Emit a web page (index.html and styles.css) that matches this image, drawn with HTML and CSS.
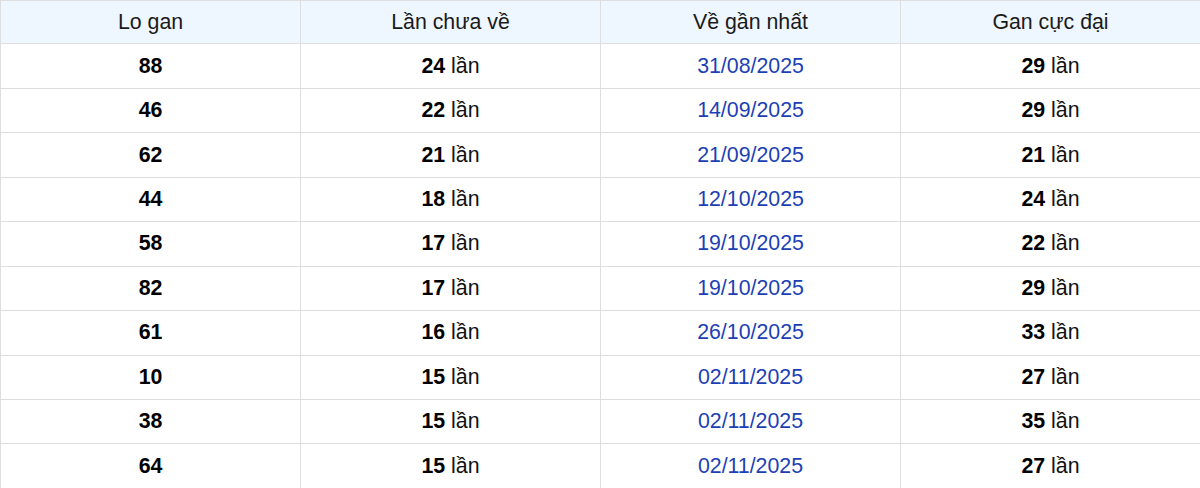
FILE: index.html
```html
<!DOCTYPE html>
<html lang="vi">
<head>
<meta charset="utf-8">
<title>Lo gan</title>
<link rel="stylesheet" href="styles.css">
</head>
<body>
<table class="gan-table">
  <colgroup><col class="c"><col class="c"><col class="c"><col class="c"></colgroup>
  <thead>
    <tr><th>Lo gan</th><th>Lần chưa về</th><th>Về gần nhất</th><th>Gan cực đại</th></tr>
  </thead>
  <tbody>
    <tr><td><b>88</b></td><td><b>24</b> lần</td><td class="date">31/08/2025</td><td><b>29</b> lần</td></tr>
    <tr><td><b>46</b></td><td><b>22</b> lần</td><td class="date">14/09/2025</td><td><b>29</b> lần</td></tr>
    <tr><td><b>62</b></td><td><b>21</b> lần</td><td class="date">21/09/2025</td><td><b>21</b> lần</td></tr>
    <tr><td><b>44</b></td><td><b>18</b> lần</td><td class="date">12/10/2025</td><td><b>24</b> lần</td></tr>
    <tr><td><b>58</b></td><td><b>17</b> lần</td><td class="date">19/10/2025</td><td><b>22</b> lần</td></tr>
    <tr><td><b>82</b></td><td><b>17</b> lần</td><td class="date">19/10/2025</td><td><b>29</b> lần</td></tr>
    <tr><td><b>61</b></td><td><b>16</b> lần</td><td class="date">26/10/2025</td><td><b>33</b> lần</td></tr>
    <tr><td><b>10</b></td><td><b>15</b> lần</td><td class="date">02/11/2025</td><td><b>27</b> lần</td></tr>
    <tr><td><b>38</b></td><td><b>15</b> lần</td><td class="date">02/11/2025</td><td><b>35</b> lần</td></tr>
    <tr><td><b>64</b></td><td><b>15</b> lần</td><td class="date">02/11/2025</td><td><b>27</b> lần</td></tr>
  </tbody>
</table>
</body>
</html>
```

FILE: styles.css
```css
html, body {
  margin: 0;
  padding: 0;
  background: #fff;
  overflow: hidden;
}
body {
  font-family: "Liberation Sans", Arial, sans-serif;
  color: #111;
}
.gan-table {
  width: 1201px;
  table-layout: fixed;
  border-collapse: separate;
  border-spacing: 0;
  border-top: 1px solid #dedede;
  border-left: 1px solid #dedede;
}
.gan-table .c {
  width: 300px;
}
.gan-table th,
.gan-table td {
  box-sizing: border-box;
  height: 44.44px;
  padding: 0 6px;
  border-right: 1px solid #dedede;
  border-bottom: 1px solid #dedede;
  text-align: center;
  vertical-align: middle;
  font-size: 21.33px;
  line-height: 25px;
}
.gan-table th {
  height: 43.44px;
  background: #eef6ff;
  font-weight: normal;
  color: #1a1a1a;
}
.gan-table td b {
  font-weight: bold;
  color: #000;
}
.gan-table td.date {
  color: #1d3fb5;
}
```
